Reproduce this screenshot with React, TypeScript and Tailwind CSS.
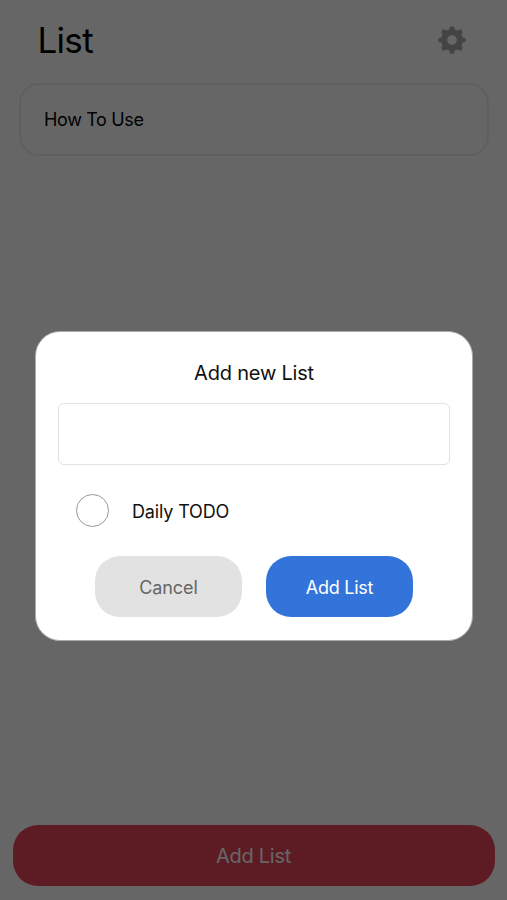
import React, { useState } from 'react';

const lists = ['How To Use'];

const teeth = [0, 45, 90, 135, 180, 225, 270, 315];

const GearIcon: React.FC = () => (
    <svg className="h-7 w-7 text-[#aaa]" viewBox="-14 -14 28 28" fill="none" stroke="currentColor">
        <circle r="7.8" strokeWidth="6" />
        {teeth.map((angle) => (
            <path key={angle} d="M0 -8.5V-11.2" strokeWidth="5.2" strokeLinecap="round" transform={`rotate(${angle})`} />
        ))}
    </svg>
);

interface AddListDialogProps {
    onClose: () => void;
}

const AddListDialog: React.FC<AddListDialogProps> = ({ onClose }) => {
    const [name, setName] = useState('');
    const [daily, setDaily] = useState(false);

    return (
        <div className="fixed inset-0 flex items-center justify-center bg-black/60 pt-[71px] pl-px">
            <div className="flex h-[310px] w-[438px] flex-col rounded-[25px] border border-[#aaa] bg-white px-[22px] pt-[26px]">
                <h2 className="text-center text-[20px] leading-[30px] tracking-[-0.2px] text-[#111]">Add new List</h2>
                <input
                    type="text"
                    value={name}
                    onChange={(e) => setName(e.target.value)}
                    className="mt-[15px] h-[62px] w-full rounded-[6px] border border-[#e2e2e2] px-4 outline-none"
                />
                <button onClick={() => setDaily(!daily)} className="mt-[29px] ml-[18px] flex items-center gap-[23px]">
                    <span className={`h-[33px] w-[33px] rounded-full border ${daily ? 'border-[#3374db] bg-[#3374db]' : 'border-[#999]'}`} />
                    <span className="pt-px text-[18px] leading-[33px] tracking-[-0.15px] text-[#111]">Daily TODO</span>
                </button>
                <div className="mt-[28px] flex justify-center gap-6">
                    <button onClick={onClose} className="h-[61px] w-[147px] rounded-[25px] bg-[#e2e2e2] pt-[2px] text-[18px] tracking-[-0.1px] text-[#666]">
                        Cancel
                    </button>
                    <button onClick={onClose} className="h-[61px] w-[147px] rounded-[25px] bg-[#3374db] pt-[2px] text-[18px] tracking-[-0.25px] text-white">
                        Add List
                    </button>
                </div>
            </div>
        </div>
    );
};

export default function App() {
    const [open, setOpen] = useState(true);

    return (
        <div className="flex h-screen flex-col bg-white font-['Inter',sans-serif] text-black">
            <header className="flex h-[83px] items-center justify-between pr-[41.5px] pb-[3px] pl-[37.5px]">
                <h1 className="text-[35px] leading-[40px] tracking-[-0.7px]">List</h1>
                <GearIcon />
            </header>
            <main className="flex-1 pr-[18px] pl-[19px]">
                {lists.map((list) => (
                    <div key={list} className="flex h-[73px] items-center rounded-[20px] border-2 border-[#eee] px-[23px] text-[18px] tracking-[-0.35px]">
                        {list}
                    </div>
                ))}
            </main>
            <footer className="pr-[12px] pb-[14px] pl-[13px]">
                <button onClick={() => setOpen(true)} className="h-[61px] w-full rounded-[25px] bg-[#e8465a] pt-px pr-px text-[20px] tracking-[-0.3px] text-white">
                    Add List
                </button>
            </footer>
            {open && <AddListDialog onClose={() => setOpen(false)} />}
        </div>
    );
}
